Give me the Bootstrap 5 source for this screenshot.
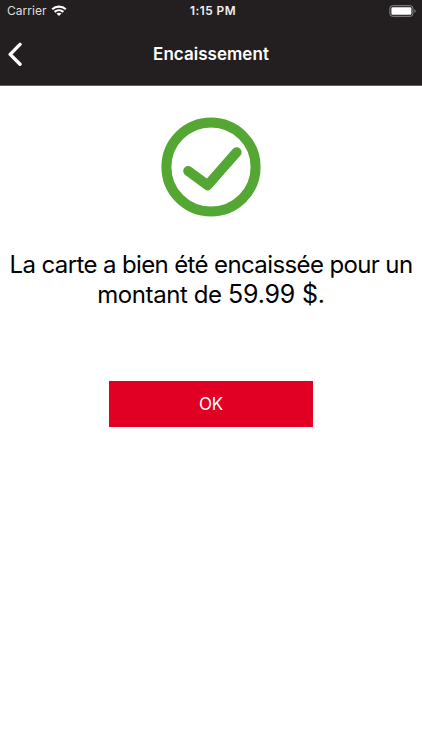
<!DOCTYPE html>
<html lang="fr">
<head>
<meta charset="utf-8">
<meta name="viewport" content="width=device-width, initial-scale=1">
<title>Encaissement</title>
<link href="https://cdn.jsdelivr.net/npm/bootstrap@5.3.0/dist/css/bootstrap.min.css" rel="stylesheet">
<style>
body { font-family: Inter, "Liberation Sans", sans-serif; color: #000; min-height: 750px; overflow: hidden; }
.app-header { background: #231f20; height: 86px; border-bottom: 1px solid #625e5f; }
.status-bar { height: 22px; padding: 0 6px 0 7px; font-size: 12px; line-height: 22px; }
.status-side { flex: 1 1 0; }
.carrier { letter-spacing: .05px; color: #dedede; }
.clock { font-weight: 600; font-size: 11.8px; letter-spacing: .5px; color: #f0f0f0; padding-left: 3px; }
.title-bar { height: 63px; padding: 0 8px; }
.screen-title { font-size: 17px; font-weight: 600; line-height: 24px; letter-spacing: .03px; }
.message { font-size: 24px; line-height: 30px; margin-top: 33px; letter-spacing: -.62px; }
.message-end { letter-spacing: -.4px; }
.amount { font-size: 25px; line-height: 1; letter-spacing: -.2px; }
.btn-ok { --bs-btn-bg: #e10024; --bs-btn-color: #fff; --bs-btn-hover-bg: #c4001f; --bs-btn-hover-color: #fff; --bs-btn-border-width: 0; --bs-btn-padding-y: 0; width: 204px; height: 46px; margin-top: 71px; font-size: 17px; line-height: 46px; letter-spacing: -.3px; }
.result-icon { margin-top: 31px; }
</style>
<script src="https://cdn.jsdelivr.net/npm/bootstrap@5.3.0/dist/js/bootstrap.bundle.min.js" defer></script>
</head>
<body class="bg-white">
<header class="app-header text-white">
  <div class="status-bar d-flex align-items-center">
    <div class="status-side d-flex align-items-center">
      <span class="carrier">Carrier</span>
      <svg class="ms-1" width="16" height="12" viewBox="0 0 16 12" fill="none" stroke="#fff" stroke-width="2.2" aria-hidden="true">
        <path d="M1.2 4.2C5 .8 11 .8 14.8 4.2M3.6 6.8C6.1 4.7 9.9 4.7 12.4 6.8"/>
        <path d="M5.5 8.6C6.9 7.6 9.1 7.6 10.5 8.6L8 11.1Z" fill="#fff" stroke="none"/>
      </svg>
    </div>
    <span class="clock">1:15 PM</span>
    <div class="status-side d-flex justify-content-end">
      <svg width="27" height="12" viewBox="0 0 27 12" aria-hidden="true">
        <rect x=".9" y=".7" width="23" height="10.6" rx="2.6" fill="none" stroke="#8d8b8c"/>
        <rect x="2.4" y="2.2" width="20" height="7.6" rx="1.2" fill="#fff"/>
        <path d="M25.4 4.2C27 4.7 27 7.3 25.4 7.8Z" fill="#8d8b8c"/>
      </svg>
    </div>
  </div>
  <nav class="title-bar d-flex align-items-center" aria-label="Navigation">
    <div class="status-side d-flex">
      <svg width="15" height="24" viewBox="0 0 15 24" fill="none" stroke="#fff" stroke-width="3.4" stroke-linecap="round" stroke-linejoin="round" role="img" aria-label="Retour"><path d="M12 2.4L2.2 12.4L12 22.3"/></svg>
    </div>
    <h1 class="screen-title mb-0">Encaissement</h1>
    <div class="status-side"></div>
  </nav>
</header>
<main class="d-flex flex-column align-items-center">
  <svg class="result-icon" width="100" height="100" viewBox="0 0 100 100" fill="none" stroke="#54a733" stroke-width="10" stroke-linecap="round" stroke-linejoin="round" aria-hidden="true">
    <circle cx="50" cy="50" r="44.6"/>
    <path d="M27.2 54L46.6 68.3L75.6 35.3"/>
  </svg>
  <p class="message text-center text-nowrap mb-0">La carte a bien été encaissée pour un<br><span class="message-end">montant de <span class="amount">59.99 $.</span></span></p>
  <button type="button" class="btn btn-ok rounded-0">OK</button>
</main>
</body>
</html>
